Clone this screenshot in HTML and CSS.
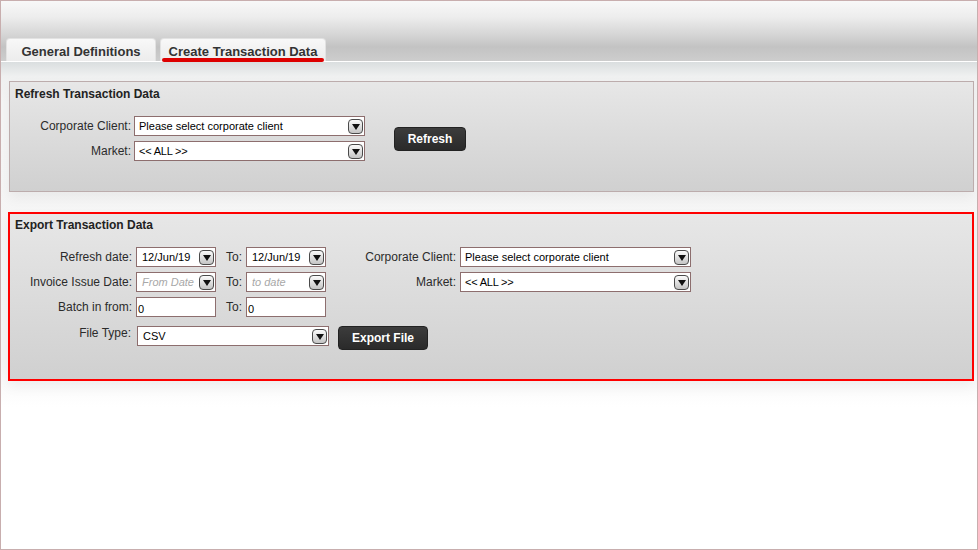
FILE: index.html
```html
<!DOCTYPE html>
<html lang="en">
  <head>
    <meta charset="UTF-8" />
    <title>Create Transaction Data</title>
    <link rel="stylesheet" href="styles.css">
  </head>
  <body>
    <div class="frame">
      <div class="header">
        <div class="tab tab_general">General Definitions</div>
        <div class="tab tab_create active">Create Transaction Data</div>
      </div>
      <div class="content">
        <div class="panel refresh_panel">
          <h3 class="panel_title">Refresh Transaction Data</h3>
          <div class="refresh_form">
            <div class="refresh_grid">
              <label class="lbl">Corporate Client:</label>
              <div class="sel"><span>Please select corporate client</span><span class="arr"></span></div>
              <label class="lbl">Market:</label>
              <div class="sel"><span class="all">&lt;&lt; ALL &gt;&gt;</span><span class="arr"></span></div>
            </div>
            <button class="btn btn_refresh">Refresh</button>
          </div>
        </div>

        <div class="panel export_panel">
          <h3 class="panel_title">Export Transaction Data</h3>
          <div class="export_grid">
            <label class="lbl">Refresh date:</label>
            <div class="sel dt"><span>12/Jun/19</span><span class="arr"></span></div>
            <label class="lbl to">To:</label>
            <div class="sel dt"><span>12/Jun/19</span><span class="arr"></span></div>
            <label class="lbl">Corporate Client:</label>
            <div class="sel"><span>Please select corporate client</span><span class="arr"></span></div>

            <label class="lbl">Invoice Issue Date:</label>
            <div class="sel dt"><span class="ph">From Date</span><span class="arr"></span></div>
            <label class="lbl to">To:</label>
            <div class="sel dt"><span class="ph">to date</span><span class="arr"></span></div>
            <label class="lbl">Market:</label>
            <div class="sel"><span class="all">&lt;&lt; ALL &gt;&gt;</span><span class="arr"></span></div>

            <label class="lbl">Batch in from:</label>
            <input class="inp" type="text" value="0" />
            <label class="lbl to">To:</label>
            <input class="inp" type="text" value="0" />
          </div>
          <div class="file_row">
            <label class="lbl file_lbl">File Type:</label>
            <div class="sel file_sel"><span>CSV</span><span class="arr"></span></div>
            <button class="btn btn_export">Export File</button>
          </div>
        </div>
      </div>
    </div>
  </body>
</html>
```

FILE: styles.css
```css
* {
  box-sizing: border-box;
  margin: 0;
  padding: 0;
}
body {
  font-family: "Liberation Sans", Arial, Helvetica, sans-serif;
  font-size: 12px;
  color: #2b2b2b;
  background: #fff;
}
.frame {
  width: 978px;
  height: 550px;
  border: 1px solid #c8aeae;
  display: flex;
  flex-direction: column;
  overflow: hidden;
}
.header {
  height: 61px;
  flex: none;
  display: flex;
  align-items: flex-end;
  gap: 4px;
  padding-left: 5px;
  border-bottom: 1px solid #fff;
  background: linear-gradient(#f8f8f8 0, #ededed 16px, #d2d2d2 36px, #c3c3c3 46px, #cdcdcd 60px);
}
.tab {
  position: relative;
  height: 23px;
  padding-top: 5px;
  text-align: center;
  font-size: 13px;
  font-weight: bold;
  color: #333;
  border: 1px solid #e2e2e2;
  border-bottom: none;
  border-radius: 4px 4px 0 0;
  background: linear-gradient(#f8f8f8, #ececec);
}
.tab_general {
  width: 150px;
}
.tab_create {
  width: 166px;
}
.tab.active::after {
  content: "";
  position: absolute;
  left: 1px;
  right: 1px;
  bottom: -1px;
  height: 4px;
  border-radius: 2px;
  background: #dd0000;
}
.content {
  flex: 1;
  padding: 19px 3px 0 7px;
  background: linear-gradient(#dadedf 0, #eff0f0 14px, #f5f5f5 40px, #f6f6f6 300px, #fff 345px);
}
.panel {
  background: linear-gradient(#e7e7e7, #d0d0d0);
  box-shadow: 0 6px 12px rgba(0, 0, 0, 0.05);
}
.panel_title {
  font-size: 12px;
  font-weight: bold;
  line-height: 14px;
  color: #222;
  padding: 5px 0 0 5px;
}
.refresh_panel {
  height: 111px;
  margin-left: 1px;
  border: 1px solid #bcacac;
}
.refresh_form {
  display: flex;
  align-items: center;
  margin-top: 15px;
}
.refresh_grid {
  display: grid;
  grid-template-columns: 124px 231px;
  grid-auto-rows: 20px;
  row-gap: 5px;
}
.lbl {
  text-align: right;
  padding-right: 3px;
  line-height: 20px;
  white-space: nowrap;
}
.sel {
  height: 20px;
  border: 1px solid #8d6e6e;
  background: #fff;
  display: flex;
  align-items: center;
  justify-content: space-between;
  padding: 0 1px 0 4px;
  font-size: 11px;
  color: #000;
}
.sel .all {
  font-size: 11px;
  letter-spacing: -0.2px;
}
.arr {
  width: 15px;
  height: 15px;
  border: 1px solid #4a4a4a;
  border-radius: 4px;
  background: linear-gradient(#fbfbfb, #c4c4c4);
  display: flex;
  align-items: center;
  justify-content: center;
}
.arr::after {
  content: "";
  width: 0;
  height: 0;
  margin-top: 1px;
  border-left: 4px solid transparent;
  border-right: 4px solid transparent;
  border-top: 6px solid #111;
}
.dt {
  padding-left: 5px;
}
.ph {
  font-style: italic;
  color: #a8a8a8;
}
.btn {
  height: 24px;
  border: 1px solid #222;
  border-radius: 4px;
  background: linear-gradient(#3c3c3c, #2a2a2a);
  color: #fff;
  font-family: "Liberation Sans", Arial, sans-serif;
  font-size: 12px;
  font-weight: bold;
}
.btn_refresh {
  width: 72px;
  margin-left: 29px;
}
.export_panel {
  height: 169px;
  margin-top: 20px;
  border: 2px solid #ff0000;
}
.export_panel .panel_title {
  padding-top: 4px;
}
.export_grid {
  display: grid;
  grid-template-columns: 126px 80px 30px 80px 134px 231px;
  grid-auto-rows: 20px;
  row-gap: 5px;
  margin-top: 15px;
}
.export_grid .lbl {
  padding-right: 4px;
}
.export_grid .to {
  padding-right: 4px;
}
.inp {
  height: 20px;
  width: 80px;
  border: 1px solid #8d6e6e;
  background: #fff;
  padding: 4px 1px 0;
  font-family: "Liberation Sans", Arial, sans-serif;
  font-size: 11px;
  color: #000;
  outline: none;
}
.file_row {
  display: flex;
  align-items: flex-start;
  margin-top: 9px;
}
.file_lbl {
  width: 127px;
  padding-right: 6px;
  line-height: 14px;
}
.file_sel {
  width: 192px;
  padding-left: 5px;
}
.btn_export {
  width: 90px;
  margin-left: 9px;
}
```
